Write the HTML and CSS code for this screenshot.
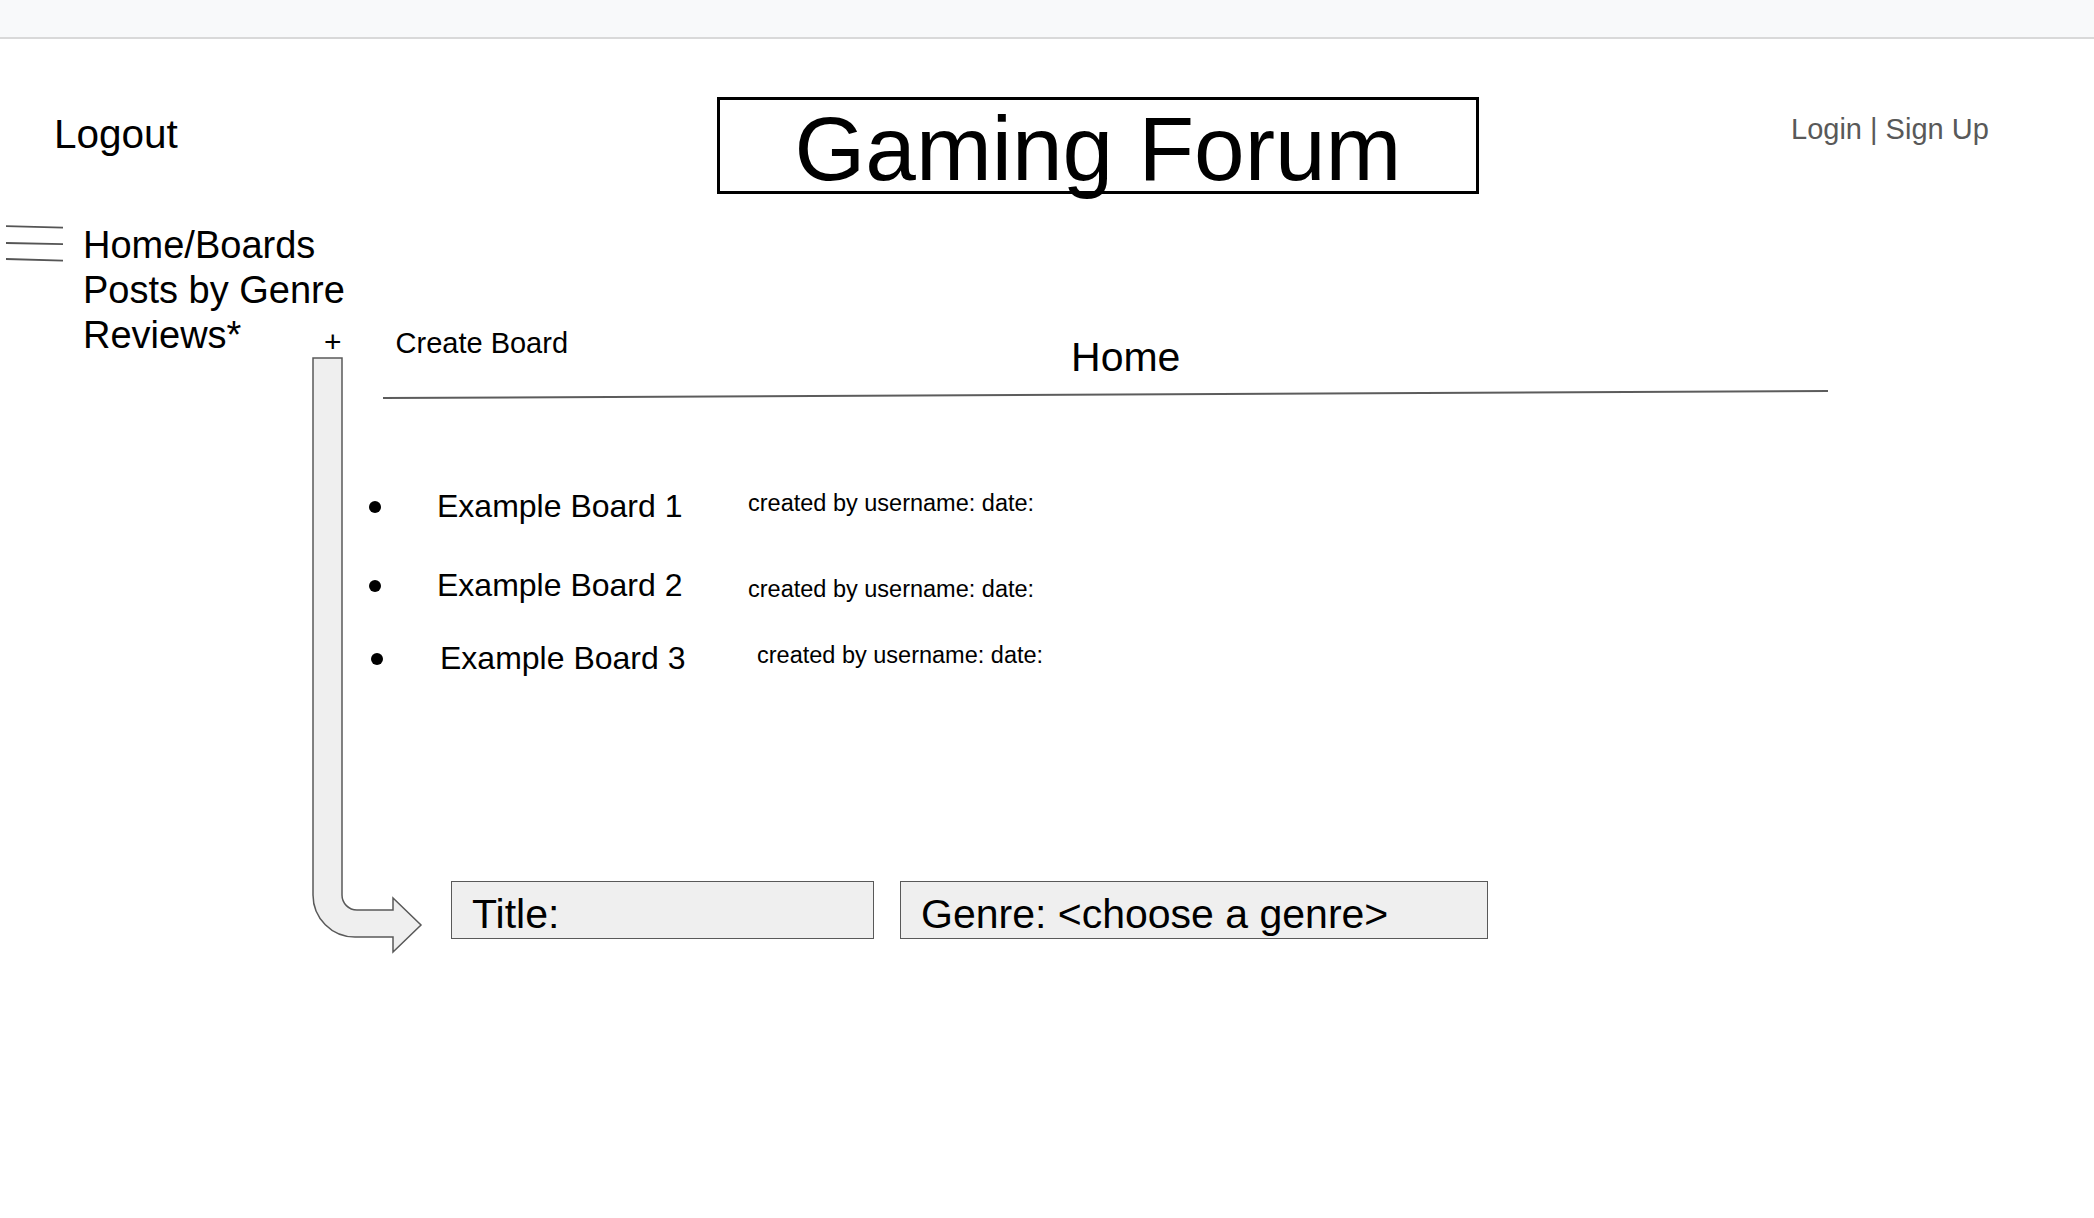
FILE: index.html
```html
<!DOCTYPE html>
<html lang="en">
<head>
<meta charset="utf-8">
<title>Gaming Forum</title>
<link rel="stylesheet" href="styles.css">
</head>
<body>
<div class="topbar"></div>
<header class="header">
  <a class="logout">Logout</a>
  <div class="title-box"><h1 class="title">Gaming Forum</h1></div>
  <div class="auth">Login | Sign Up</div>
</header>
<div class="content">
  <nav class="sidenav">
    <svg class="hamburger" width="60" height="40" viewBox="0 0 60 40">
      <path d="M1 3.2 L58 4.6 M1 20 L58 21.2 M1 36 L58 37.6" stroke="#555555" stroke-width="1.8" fill="none"/>
    </svg>
    <ul class="nav-list">
      <li>Home/Boards</li>
      <li>Posts by Genre</li>
      <li>Reviews*</li>
    </ul>
  </nav>
  <main class="main">
    <svg class="arrow" width="116" height="600" viewBox="0 0 116 600">
      <path d="M2 2 L31 2 L31 539 A15 15 0 0 0 46 554 L82 554 L82 542 L110 569 L82 596 L82 581 L44 581 A42 42 0 0 1 2 539 Z" fill="#efefef" stroke="#595959" stroke-width="1.5"/>
    </svg>
    <div class="toolbar">
      <span class="plus">+</span>
      <span class="create">Create Board</span>
      <h2 class="page-title">Home</h2>
    </div>
    <div class="rule"></div>
    <ul class="boards">
      <li class="board"><span class="bullet"></span><span class="board-name">Example Board 1</span><span class="board-meta">created by username: date:</span></li>
      <li class="board"><span class="bullet"></span><span class="board-name">Example Board 2</span><span class="board-meta">created by username: date:</span></li>
      <li class="board"><span class="bullet"></span><span class="board-name">Example Board 3</span><span class="board-meta">created by username: date:</span></li>
    </ul>
    <div class="form-row">
      <div class="field field-title">Title:</div>
      <div class="field field-genre">Genre: &lt;choose a genre&gt;</div>
    </div>
  </main>
</div>
</body>
</html>
```
FILE: styles.css
```css
html, body {
  margin: 0;
  padding: 0;
  background: #ffffff;
}
body {
  font-family: "Liberation Sans", Arial, sans-serif;
  color: #000;
  width: 2094px;
  min-height: 1218px;
}
.topbar {
  height: 37px;
  background: #f8f9fa;
  border-bottom: 2px solid #d9d9d9;
}
.header {
  display: grid;
  grid-template-columns: 663px 762px auto;
  align-items: start;
  padding: 58px 0 0 54px;
}
.logout {
  display: block;
  font-size: 40.5px;
  line-height: 40px;
  margin-top: 17px;
}
.title-box {
  height: 97px;
  box-sizing: border-box;
  border: 3px solid #000;
  padding-top: 3px;
  text-align: center;
}
.title {
  margin: 0;
  font-weight: normal;
  font-size: 91px;
  line-height: 91px;
  white-space: nowrap;
}
.auth {
  margin: 18px 0 0 312px;
  font-size: 29px;
  line-height: 29px;
  color: #595959;
  white-space: nowrap;
}
.content {
  display: grid;
  grid-template-columns: 313px 1fr;
  align-items: start;
}
.sidenav {
  display: flex;
  align-items: flex-start;
  padding-top: 29px;
}
.hamburger {
  display: block;
  flex: none;
  margin-left: 5px;
}
.nav-list {
  list-style: none;
  flex: none;
  margin: 0 0 0 18px;
  padding: 0;
  font-size: 38px;
  line-height: 45px;
  white-space: nowrap;
}
.main {
  position: relative;
  padding-top: 135px;
}
.arrow {
  position: absolute;
  left: -2px;
  top: 162px;
}
.toolbar {
  display: flex;
  align-items: flex-start;
  height: 48px;
}
.plus {
  font-size: 30px;
  line-height: 30px;
  margin: -2px 0 0 11px;
}
.create {
  font-size: 29px;
  line-height: 28px;
  margin-left: 54px;
  white-space: nowrap;
}
.page-title {
  margin: 8px 0 0 503px;
  font-weight: normal;
  font-size: 41px;
  line-height: 40px;
}
.rule {
  margin: 20px 0 0 70px;
  width: 1445px;
  height: 2px;
  background: #5c5c5c;
  transform: rotate(-0.28deg);
  transform-origin: left center;
}
.boards {
  list-style: none;
  margin: 91px 0 0 0;
  padding: 0;
}
.board {
  display: flex;
  align-items: flex-start;
  height: 32px;
}
.board:nth-child(2) {
  margin-top: 47px;
}
.board:nth-child(3) {
  margin-top: 41px;
}
.bullet {
  width: 12px;
  height: 12px;
  border-radius: 50%;
  background: #000;
  margin: 11px 0 0 56px;
  flex: none;
}
.board-name {
  font-size: 32px;
  line-height: 32px;
  margin-left: 56px;
  width: 311px;
  white-space: nowrap;
  flex: none;
}
.board-meta {
  font-size: 23.5px;
  line-height: 23px;
  margin-top: 2px;
  white-space: nowrap;
}
.board:nth-child(2) .board-meta {
  margin-top: 9px;
}
.board:nth-child(3) .bullet {
  margin-left: 58px;
}
.board:nth-child(3) .board-name {
  margin-left: 57px;
  width: 317px;
}
.form-row {
  display: flex;
  gap: 26px;
  margin: 207px 0 0 138px;
}
.field {
  height: 58px;
  box-sizing: border-box;
  border: 1.5px solid #595959;
  background: #efefef;
  padding: 12px 0 0 20px;
  font-size: 41px;
  line-height: 41px;
  white-space: nowrap;
}
.field-title {
  width: 423px;
}
.field-genre {
  width: 588px;
}
```
